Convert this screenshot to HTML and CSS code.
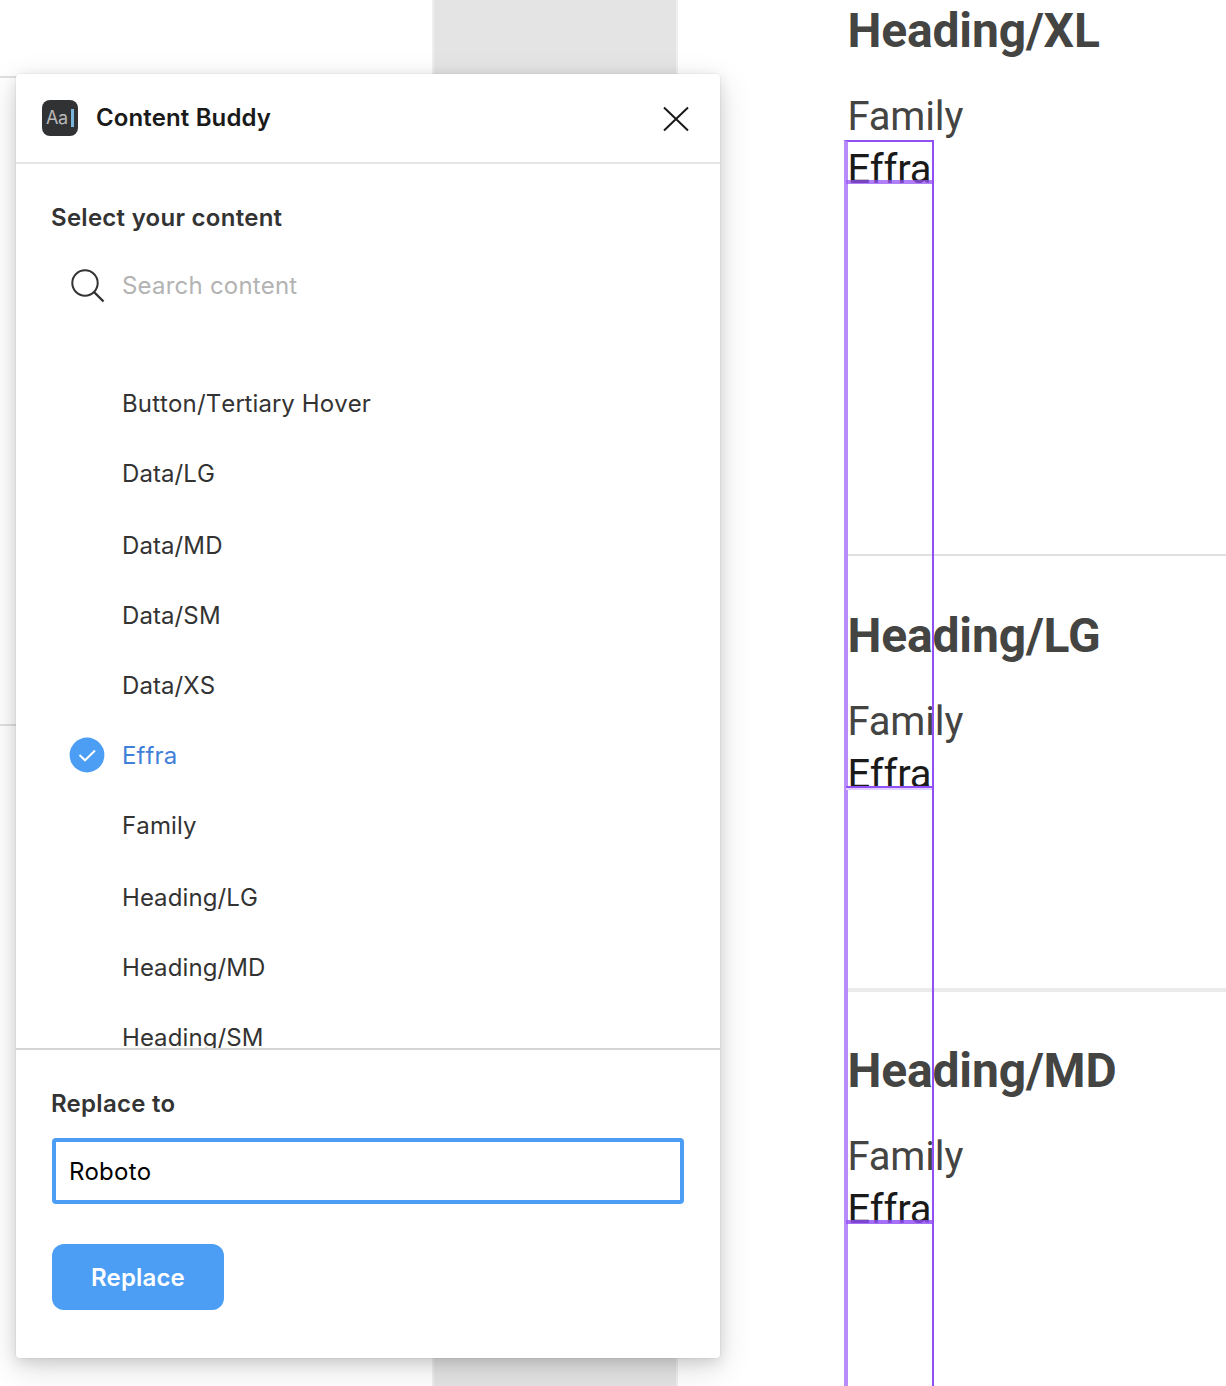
FILE: index.html
```html
<!DOCTYPE html>
<html lang="en">
<head>
<meta charset="utf-8">
<title>Content Buddy</title>
<link rel="stylesheet" href="styles.css">
</head>
<body>
<main class="canvas">
  <div class="rule rule-left-top"></div>
  <div class="rule rule-left-mid"></div>
  <div class="frame"></div>

  <div class="specs">
    <section class="spec spec-xl"><h2>Heading/XL</h2><p>Family</p><p class="value">Effra</p></section>
    <section class="spec spec-lg"><h2>Heading/LG</h2><p>Family</p><p class="value">Effra</p></section>
    <section class="spec spec-md"><h2>Heading/MD</h2><p>Family</p><p class="value">Effra</p></section>
  </div>
  <div class="selection"></div>
  <div class="baseline baseline-xl"></div>
  <div class="baseline baseline-lg"></div>
  <div class="baseline baseline-md"></div>

  <div class="window">
    <header class="titlebar">
      <span class="logo"><span class="logo-text">Aa</span><span class="logo-caret"></span></span>
      <h1>Content Buddy</h1>
      <svg class="close" width="28" height="28" viewBox="0 0 28 28"><path d="M2 2.500L26 25.500M26 2.500L2 25.500" fill="none" stroke="#1a1a1a" stroke-width="2"/></svg>
    </header>
    <div class="content">
      <h3 class="label">Select your content</h3>
      <div class="search">
        <svg width="34" height="34" viewBox="0 0 34 34"><g fill="none" stroke="#333" stroke-width="2"><circle cx="14" cy="14" r="12.700"/><path d="M23 23L32.500 32.500" stroke-width="2.400"/></g></svg>
        <span>Search content</span>
      </div>
      <ul class="list">
        <li>Button/Tertiary Hover</li>
        <li>Data/LG</li>
        <li class="down">Data/MD</li>
        <li>Data/SM</li>
        <li>Data/XS</li>
        <li class="selected"><svg width="36" height="36" viewBox="0 0 36 36"><circle cx="18" cy="18" r="17.400" fill="#4c9ef5"/><path d="M10.500 18L16 23.300L26 13.500" fill="none" stroke="#fff" stroke-width="2"/></svg>Effra</li>
        <li>Family</li>
        <li class="down">Heading/LG</li>
        <li>Heading/MD</li>
        <li>Heading/SM</li>
      </ul>
    </div>
    <footer class="replace">
      <h3 class="label">Replace to</h3>
      <div class="field">Roboto</div>
      <button class="button" type="button">Replace</button>
    </footer>
  </div>
</main>
</body>
</html>
```
FILE: styles.css
```css
* { box-sizing: border-box; }
body, h1, h2, h3, p, ul { margin: 0; padding: 0; }
body { background: #fff; font-family: Inter, "Liberation Sans", sans-serif; }

.canvas { position: relative; width: 1226px; height: 1386px; overflow: hidden; background: #fff; }
.frame { position: absolute; left: 432px; top: 0; width: 246px; height: 1386px; background: #e4e4e4; border: solid #efefef; border-width: 0 2px; }
.rule { position: absolute; left: 0; width: 100px; height: 2px; background: #e0e0e0; }
.rule-left-top { top: 76px; }
.rule-left-mid { top: 724px; }

/* Typography specimens */
.specs { padding-left: 848px; font-family: Roboto, "Liberation Sans", sans-serif; color: #444442; letter-spacing: -.15px; }
.spec h2, .spec p { margin-left: -.6px; white-space: nowrap; }
.spec h2 { font-size: 48px; line-height: 56px; font-weight: 700; margin-bottom: 31px; }
.spec p { font-size: 40px; line-height: 53px; }
.spec .value { color: #1a1a1a; }
.spec-xl { height: 554px; padding-top: 3px; }
.spec-lg { height: 434px; padding-top: 52px; border-top: 2px solid #e0e0e0; }
.spec-md { height: 398px; padding-top: 51px; border-top: 4px solid #ebebeb; }

.selection { position: absolute; left: 844px; top: 140px; width: 90px; height: 1260px; border: 2px solid #9150f5; border-left: 4px solid #b98cfb; }
.baseline { position: absolute; left: 846px; width: 86px; }
.baseline-xl { top: 180px; height: 4px; background: rgba(151, 85, 245, .75); }
.baseline-lg { top: 786px; height: 2px; background: #9150f5; box-shadow: 0 2px #e2d0fd; }
.baseline-md { top: 1220px; height: 4px; background: rgba(145, 80, 245, .82); }

/* Plugin window */
.window {
  position: absolute; left: 16px; top: 74px; width: 704px; height: 1284px;
  display: flex; flex-direction: column; overflow: hidden;
  background: #fff; border-radius: 4px;
  box-shadow: 0 10px 34px rgba(0,0,0,.14), 0 4px 14px rgba(0,0,0,.12), 0 0 0 1px rgba(0,0,0,.03);
}
.titlebar { flex: none; height: 90px; display: flex; align-items: center; padding: 0 30px 0 26px; border-bottom: 2px solid #e5e5e5; }
.titlebar h1 { margin-left: 18px; font-size: 24px; line-height: 32px; font-weight: 600; color: #1a1a1a; letter-spacing: .13px; }
.logo { width: 36px; height: 36px; border-radius: 8px; background: #303234; display: flex; align-items: center; padding-left: 4px; }
.logo-text { width: 22px; font-size: 18px; line-height: 22px; color: #b8b8b8; letter-spacing: -.3px; }
.logo-caret { width: 3px; height: 18px; margin-left: 3px; background: #78b4dc; }
.close { margin-left: auto; margin-top: 2px; }
.content { flex: none; height: 884px; overflow: hidden; padding: 38px 36px 0; }
.label { margin-left: -1px; font-size: 24px; line-height: 32px; font-weight: 600; color: #333; letter-spacing: .27px; }
.search { display: flex; align-items: center; gap: 17px; height: 36px; margin: 33px 0 0 19px; font-size: 24px; color: #b3b3b3; letter-spacing: .22px; }
.search svg { margin-top: 2px; }
.list { list-style: none; margin: 65px 0 0 18px; font-kerning: none; }
.list li { display: flex; align-items: center; height: 70px; padding-left: 52px; font-size: 24px; color: #333; letter-spacing: .12px; }
.list .down { height: 72px; padding-top: 2px; }
.list .selected { padding-left: 0; color: #4180d9; }
.selected svg { margin: 0 17px 0 -1px; }
.replace { flex: none; height: 310px; padding: 38px 36px 0; border-top: 2px solid #d4d4d4; }
.field { height: 66px; margin-top: 18px; border: 4px solid #4c9ef5; border-radius: 4px; padding: 1px 13px 0; font-size: 24px; line-height: 58px; color: #000; letter-spacing: .3px; }
.button { display: block; width: 172px; height: 66px; margin-top: 40px; padding: 2px 0 0; border: 0; border-radius: 12px; background: #4c9ef5; color: #fff; font: 600 24px/32px Inter, "Liberation Sans", sans-serif; letter-spacing: .15px; }
```
